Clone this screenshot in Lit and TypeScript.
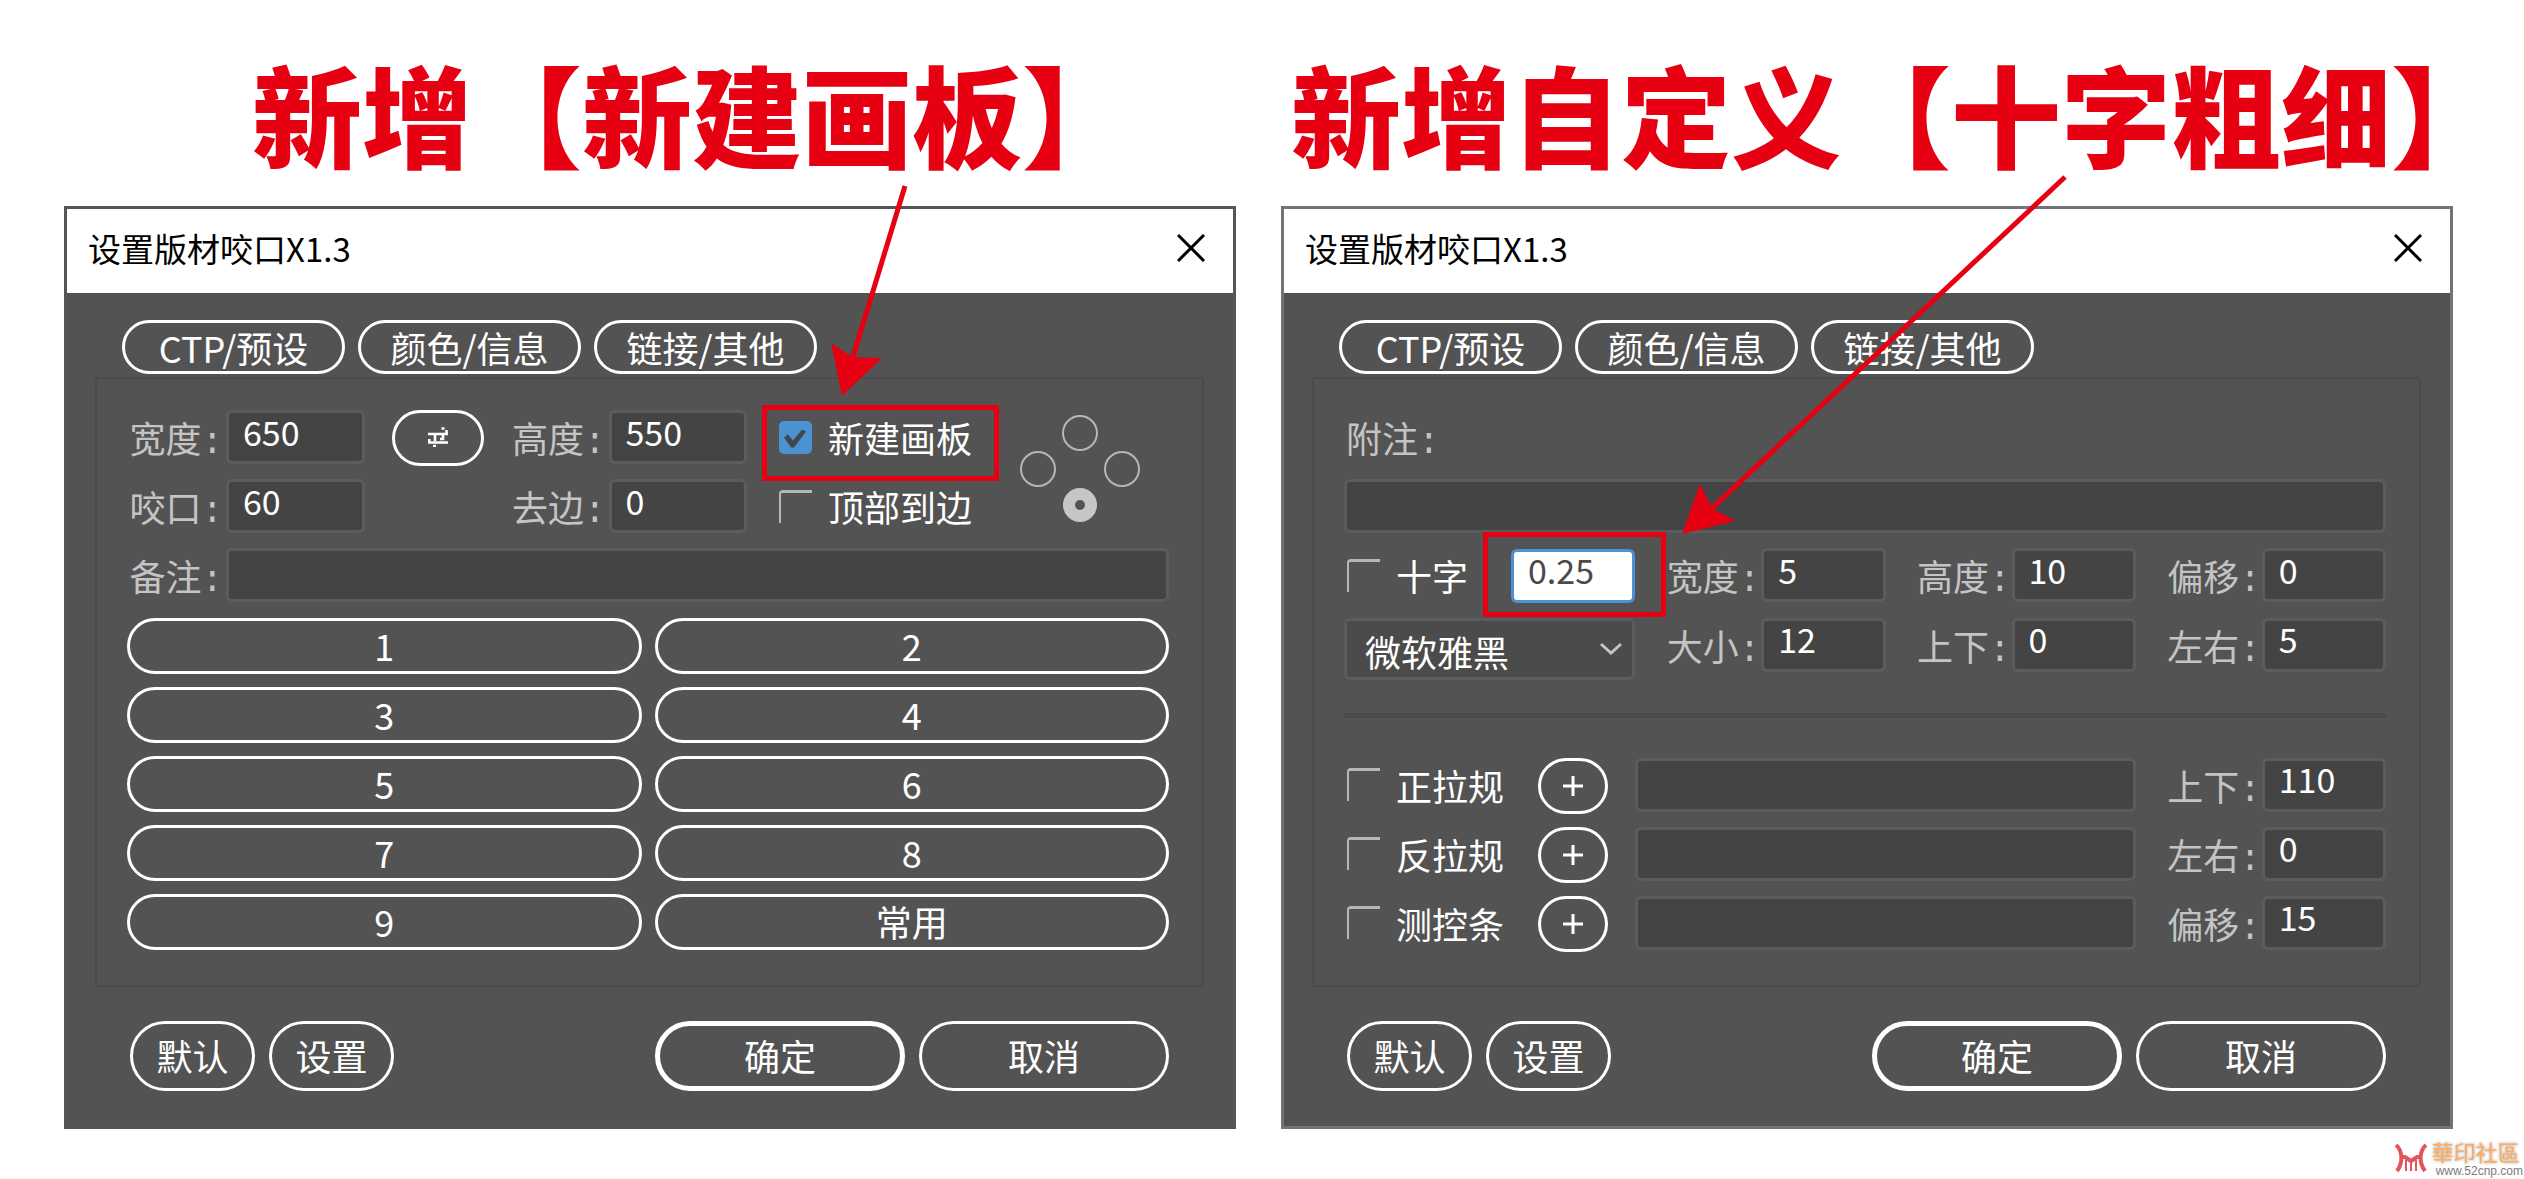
import { LitElement, html, css, svg } from "lit";
import { customElement } from "lit/decorators.js";

const presets = ["1", "2", "3", "4", "5", "6", "7", "8", "9", "常用"];
const tabs = ["CTP/预设", "颜色/信息", "链接/其他"];
const marks = [
  { id: "front", name: "正拉规", field: "上下", value: "110" },
  { id: "back", name: "反拉规", field: "左右", value: "0" },
  { id: "strip", name: "测控条", field: "偏移", value: "15" },
];

@customElement("app-root")
export class AppRoot extends LitElement {
  static styles = css`
    :host {
      display: block;
      background: #fff;
      font-family: "Noto Sans CJK SC", sans-serif;
      font-size: 36px;
      line-height: 40px;
      color: #fff;
    }
    * {
      box-sizing: border-box;
    }
    .page {
      display: grid;
      grid-template-columns: 1fr 1fr;
      gap: 45px;
      padding: 37px 71px 0 64px;
    }
    .side {
      position: relative;
      min-width: 0;
    }
    .headline {
      margin: 0;
      padding-left: 188px;
      font-size: 110px;
      font-weight: 900;
      line-height: 150px;
      height: 169px;
      color: #e60012;
      white-space: nowrap;
    }
    .headline.long {
      padding-left: 10px;
    }
    .dialog {
      border: 3px solid #555;
      background: #535353;
    }
    .dialog.inactive {
      border-color: #747474;
    }
    .titlebar {
      display: flex;
      align-items: center;
      justify-content: space-between;
      height: 84px;
      padding: 0 24px 6px 21px;
      background: #fff;
      color: #000;
    }
    .title {
      margin: 0;
      font-family: "Noto Sans CJK SC", sans-serif;
      font-size: 33px;
      font-weight: 400;
      line-height: 40px;
    }
    button,
    input,
    select {
      font: inherit;
      color: inherit;
      margin: 0;
    }
    .close {
      display: flex;
      padding: 4px;
      border: 0;
      background: none;
    }
    .body {
      padding: 27px 29px 35px 28px;
    }
    .tabs {
      display: flex;
      gap: 13px;
      padding: 0 27px;
      margin-bottom: 3px;
    }
    .pill {
      display: flex;
      align-items: center;
      justify-content: center;
      padding: 0 0 2px;
      border: 3px solid #fff;
      border-radius: 36px;
      background: none;
      height: 56px;
      min-width: 0;
      white-space: nowrap;
    }
    .tab {
      width: 223px;
      height: 54px;
      padding: 0;
    }
    .panel {
      border: 2px solid #4b4b4b;
      border-radius: 4px;
      padding: 31px 33px 31px 30px;
      height: 610px;
    }
    .settings {
      display: grid;
      grid-template-columns: 99px 1fr 146px 98px 1fr 270px 152px;
      row-gap: 15px;
      grid-auto-rows: 54px;
    }
    .name {
      padding: 14px 3px 0 0;
      font-family: "Liberation Mono", "Noto Sans CJK SC", monospace;
      line-height: 40px;
      height: 54px;
      text-align: right;
      color: #c4c4c4;
      white-space: nowrap;
    }
    .name.start {
      text-align: left;
      padding-left: 2px;
    }
    .crossing .name {
      padding-right: 1px;
    }
    .field {
      width: 100%;
      min-width: 0;
      height: 54px;
      padding: 0 12px 12px 14px;
      border: 3px solid #5a5d5c;
      border-radius: 6px;
      background: #444;
      font-size: 34px;
      outline: none;
    }
    .field.active {
      border-color: #4a92d2;
      background: #fff;
      color: #4a4a4a;
    }
    .swap {
      width: 92px;
      justify-self: center;
    }
    .note {
      grid-column: 2 / -1;
    }
    .wide {
      grid-column: 1 / -1;
    }
    .check {
      display: flex;
      align-items: center;
      gap: 16px;
      height: 54px;
      white-space: nowrap;
    }
    .check.inset {
      padding-left: 32px;
    }
    .check.outset {
      padding-left: 3px;
    }
    .box {
      appearance: none;
      flex: none;
      width: 33px;
      height: 33px;
      border: 0 solid #b6b6b6;
      border-width: 3px 0 0 2px;
      border-radius: 4px 0 0 0;
    }
    .box:checked {
      border: 0;
      border-radius: 5px;
      background: #4a92d2;
    }
    .box:checked::after {
      content: "";
      display: block;
      width: 33px;
      height: 33px;
      background: #40474d;
      clip-path: polygon(5px 17px, 9px 14px, 14px 20px, 23px 9px, 27px 11px, 15px 27px, 12px 27px);
    }
    .marked {
      position: relative;
    }
    .frame {
      position: absolute;
      border: 5px solid #e60012;
      pointer-events: none;
    }
    .frame.board {
      inset: -5px 18px -17px 15px;
    }
    .frame.stroke {
      inset: -16px -31px -14px -28px;
    }
    .compass {
      grid-row: 1 / 3;
      grid-column: 7;
      display: grid;
      grid-template-columns: repeat(3, 42px);
      grid-template-rows: repeat(3, 36px);
      place-items: center;
      align-content: start;
      margin: 0;
      padding: 5px 0 0;
      border: 0;
      min-width: 0;
    }
    .radio {
      appearance: none;
      width: 36px;
      height: 36px;
      border: 2px solid #b6b6b6;
      border-radius: 50%;
    }
    .radio:checked {
      width: 34px;
      height: 34px;
      border: 12px solid #c6c6c6;
    }
    .north {
      grid-area: 1 / 2;
    }
    .west {
      grid-area: 2 / 1;
    }
    .east {
      grid-area: 2 / 3;
    }
    .south {
      grid-area: 3 / 2;
    }
    .presets {
      display: grid;
      grid-template-columns: 1fr 1fr;
      gap: 13px;
      padding-top: 16px;
    }
    .crossing {
      display: grid;
      grid-template-columns: 167px 1fr 126px 1fr 126px 1fr 126px 1fr;
      row-gap: 15px;
      align-items: start;
    }
    .fonts {
      position: relative;
      grid-column: 1 / 3;
      display: flex;
      align-items: center;
    }
    .font {
      appearance: none;
      width: 100%;
      height: 62px;
      padding: 4px 18px 0;
      border: 3px solid #5a5d5c;
      border-radius: 6px;
      background: #4b4b4b;
    }
    .chevron {
      position: absolute;
      right: 12px;
      pointer-events: none;
    }
    .rule {
      height: 5px;
      margin: 33px 0 40px;
      border: 0;
      background: #4a4a4a;
    }
    .tools {
      grid-column: 1 / 3;
      display: flex;
      justify-content: space-between;
      height: 54px;
      padding-right: 27px;
    }
    .add {
      width: 70px;
      padding: 0;
      border-radius: 28px;
    }
    .span {
      grid-column: 3 / 7;
    }
    .actions {
      display: flex;
      gap: 14px;
      padding: 34px 35px 0 35px;
    }
    .actions .pill {
      width: 125px;
      height: 70px;
    }
    .actions .main {
      width: 250px;
    }
    .actions .push {
      margin-left: auto;
      border-width: 5px;
    }
    .arrow {
      position: absolute;
      left: 0;
      top: 0;
      overflow: visible;
      pointer-events: none;
    }
    .credit {
      display: flex;
      justify-content: flex-end;
      gap: 4px;
      padding: 14px 1px 0 0;
    }
    .site {
      display: flex;
      flex-direction: column;
      font-size: 22px;
      line-height: 21px;
      font-family: "Liberation Sans", "Noto Sans CJK TC", sans-serif;
      color: #ffae5e;
      text-shadow: 0 0 3px #999;
      text-decoration: none;
    }
    .url {
      padding-left: 4px;
      font-size: 12px;
      line-height: 15px;
      color: #7a7a7a;
      text-shadow: none;
    }
  `;

  private titlebar() {
    return html`<header class="titlebar">
      <h2 class="title">设置版材咬口X1.3</h2>
      <button class="close" aria-label="关闭">
        <svg width="28" height="28" viewBox="0 0 28 28">
          <path d="M1 1L27 27M27 1L1 27" stroke="#000" stroke-width="3" />
        </svg>
      </button>
    </header>`;
  }

  private tabs() {
    return html`<nav class="tabs">${tabs.map((t) => html`<button class="pill tab">${t}</button>`)}</nav>`;
  }

  private actions() {
    return html`<footer class="actions">
      <button class="pill">默认</button>
      <button class="pill">设置</button>
      <button class="pill main push">确定</button>
      <button class="pill main">取消</button>
    </footer>`;
  }

  private field(id: string, name: string, value: string) {
    return html`<label class="name" for=${id}>${name}:</label>
      <input class="field" id=${id} type="text" .value=${value} />`;
  }

  private arrow(line: string, head: string) {
    return html`<svg class="arrow" width="10" height="10" aria-hidden="true">
      ${svg`<path d=${line} stroke="#e60012" stroke-width="5" fill="none" /><path d=${head} fill="#e60012" />`}
    </svg>`;
  }

  private sizeDialog() {
    return html`<div class="dialog" role="dialog">
      ${this.titlebar()}
      <div class="body">
        ${this.tabs()}
        <div class="panel">
          <div class="settings">
            ${this.field("w", "宽度", "650")}
            <button class="pill swap" aria-label="互换">
              <svg width="20" height="20" viewBox="0 0 20 20" fill="none" stroke="#fff" stroke-width="2.6">
                <path d="M0 7H20M18.5 3V8M13.5 1.5H16.5M0 15.5H20M1.3 12V16M5 19H8M7 8V14M15 8V12H12" />
              </svg>
            </button>
            ${this.field("h", "高度", "550")}
            <div class="marked">
              <label class="check inset"
                ><input class="box" type="checkbox" checked /><span class="word">新建画板</span></label
              >
              <span class="frame board"></span>
            </div>
            <fieldset class="compass">
              <input class="radio north" type="radio" name="edge" aria-label="上" />
              <input class="radio west" type="radio" name="edge" aria-label="左" />
              <input class="radio east" type="radio" name="edge" aria-label="右" />
              <input class="radio south" type="radio" name="edge" aria-label="下" checked />
            </fieldset>
            ${this.field("grip", "咬口", "60")}
            <span></span>
            ${this.field("trim", "去边", "0")}
            <label class="check inset"><input class="box" type="checkbox" /><span class="word">顶部到边</span></label>
            <label class="name" for="memo">备注:</label>
            <input class="field note" id="memo" type="text" />
          </div>
          <div class="presets">${presets.map((p) => html`<button class="pill">${p}</button>`)}</div>
        </div>
        ${this.actions()}
      </div>
    </div>`;
  }

  private markDialog() {
    return html`<div class="dialog inactive" role="dialog">
      ${this.titlebar()}
      <div class="body">
        ${this.tabs()}
        <div class="panel">
          <div class="crossing">
            <label class="name start wide" for="remark">附注:</label>
            <input class="field wide" id="remark" type="text" />
            <label class="check outset"><input class="box" type="checkbox" /><span class="word">十字</span></label>
            <div class="marked">
              <input class="field active" type="text" aria-label="十字粗细" .value=${"0.25"} />
              <span class="frame stroke"></span>
            </div>
            ${this.field("cw", "宽度", "5")} ${this.field("ch", "高度", "10")} ${this.field("co", "偏移", "0")}
            <div class="fonts">
              <select class="font" aria-label="字体">
                <option>微软雅黑</option>
              </select>
              <svg class="chevron" width="24" height="14" viewBox="0 0 24 14" fill="none" stroke="#c4c4c4" stroke-width="3">
                <path d="M2 2L12 11L22 2" />
              </svg>
            </div>
            ${this.field("size", "大小", "12")} ${this.field("ud", "上下", "0")} ${this.field("lr", "左右", "5")}
          </div>
          <hr class="rule" />
          <div class="crossing">
            ${marks.map(
              (m) => html`<div class="tools">
                  <label class="check outset"><input class="box" type="checkbox" /><span class="word">${m.name}</span></label>
                  <button class="pill add" aria-label="添加">
                    <svg width="20" height="20" viewBox="0 0 20 20" stroke="#fff" stroke-width="3">
                      <path d="M0 10H20M10 0V20" />
                    </svg>
                  </button>
                </div>
                <input class="field span" type="text" aria-label=${m.name} />
                ${this.field(m.id, m.field, m.value)}`
            )}
          </div>
        </div>
        ${this.actions()}
      </div>
    </div>`;
  }

  render() {
    return html`<main class="page">
        <section class="side">
          <h1 class="headline">新增【新建画板】</h1>
          ${this.sizeDialog()} ${this.arrow("M841 149L788 323", "M778 359L767 306L788 320L818 321Z")}
        </section>
        <section class="side">
          <h1 class="headline long">新增自定义【十字粗细】</h1>
          ${this.markDialog()} ${this.arrow("M784 140L430 472", "M401 497L419 447L431 471L454 484Z")}
        </section>
      </main>
      <div class="credit">
        <svg width="34" height="30" viewBox="0 0 34 30" fill="none" stroke="#e4545c" aria-hidden="true">
          <path d="M2 2C9 8 9 20 3 28M32 2C25 8 25 20 31 28" stroke-width="4" />
          <path d="M7 14H11L17 18L23 14H27" stroke-width="4" />
          <path d="M12 17V28M17 19V28M22 17V28" stroke-width="2" />
        </svg>
        <a class="site" href="#"><span class="brand">華印社區</span><span class="url">www.52cnp.com</span></a>
      </div>`;
  }
}
